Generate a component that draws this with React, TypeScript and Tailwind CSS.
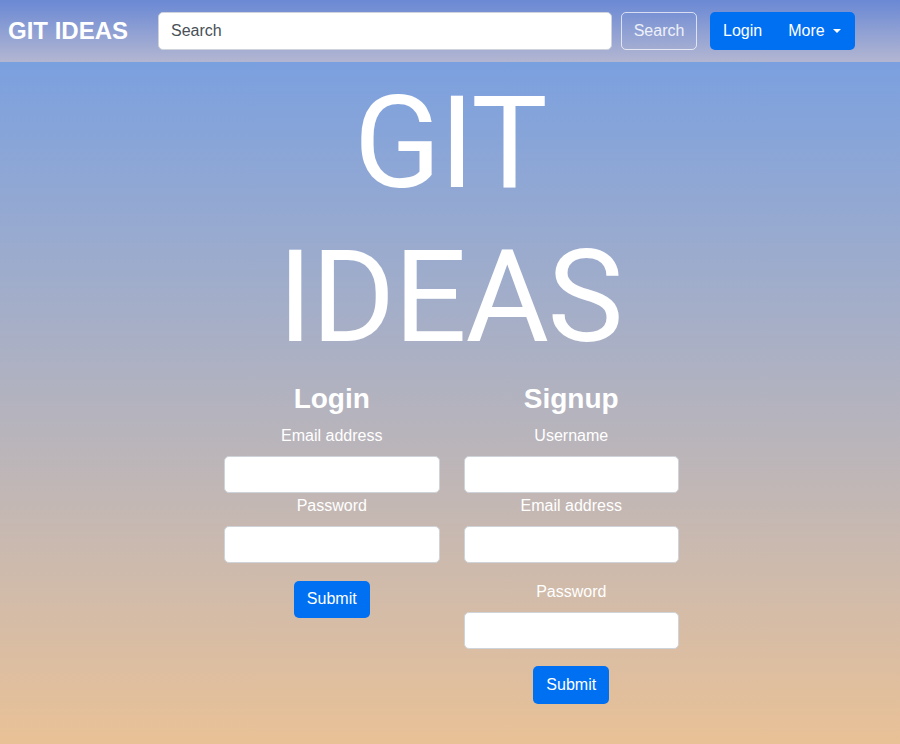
export default function App() {
  return (
    <div className="min-h-screen flex flex-col font-['Liberation_Sans',Arial,sans-serif] text-white">
      {/* top bar */}
      <nav className="h-[62px] flex items-start pt-3 px-2 bg-gradient-to-b from-[#6a88d4] to-[#b3b6d1]">
        <span className="text-2xl font-bold mr-[30px] leading-[37px]">GIT IDEAS</span>
        <input
          placeholder="Search"
          className="w-[454px] h-[38px] rounded-[5px] bg-white border border-[#ced4da] px-3 text-base text-[#495057] placeholder:text-[#495057] outline-none"
        />
        <button className="ml-[9px] w-[76px] h-[38px] rounded-[5px] border border-white/70 text-base text-white/85">
          Search
        </button>
        <div className="ml-[13px] h-[38px] rounded-[5px] bg-[#0070f3] flex items-center pl-[13px] pr-[14px] text-base">
          <span>Login</span>
          <span className="ml-[26px]">More</span>
          <span className="ml-[8px] w-0 h-0 border-l-[4px] border-r-[4px] border-t-[4px] border-l-transparent border-r-transparent border-t-white" />
        </div>
      </nav>

      <main className="flex-1 bg-gradient-to-b from-[#7ba0df] to-[#e9c196] pb-10">
        <h1 className="mx-auto pt-[5px] w-[460px] text-center font-['Roboto',Arial,sans-serif] text-[128px] leading-[1.2] font-normal tracking-[-0.01em]">
          GIT IDEAS
        </h1>

        <div className="mx-auto w-[482px] pl-[3px] grid grid-cols-2">
          <form className="px-3 text-center" onSubmit={(e) => e.preventDefault()}>
            <h3 className="mt-[8px] mb-2 text-[28px] leading-[1.2] font-bold">Login</h3>
            <label className="block leading-6 mb-2">Email address</label>
            <input type="email" className="block w-full h-[37px] rounded-[5px] bg-white border border-[#ced4da]" />
            <label className="block leading-6 mb-2 mt-px">Password</label>
            <input type="password" className="block w-full h-[37px] rounded-[5px] bg-white border border-[#ced4da]" />
            <button className="mt-[18px] h-[37px] px-[13px] rounded-[5px] bg-[#0070f3] text-base">Submit</button>
          </form>

          <form className="px-3 text-center" onSubmit={(e) => e.preventDefault()}>
            <h3 className="mt-[8px] mb-2 text-[28px] leading-[1.2] font-bold">Signup</h3>
            <label className="block leading-6 mb-2">Username</label>
            <input className="block w-full h-[37px] rounded-[5px] bg-white border border-[#ced4da]" />
            <label className="block leading-6 mb-2 mt-px">Email address</label>
            <input type="email" className="block w-full h-[37px] rounded-[5px] bg-white border border-[#ced4da] mb-[17px]" />
            <label className="block leading-6 mb-2">Password</label>
            <input type="password" className="block w-full h-[37px] rounded-[5px] bg-white border border-[#ced4da]" />
            <button className="mt-[17px] h-[38px] px-[13px] rounded-[5px] bg-[#0070f3] text-base">Submit</button>
          </form>
        </div>
      </main>
    </div>
  );
}
